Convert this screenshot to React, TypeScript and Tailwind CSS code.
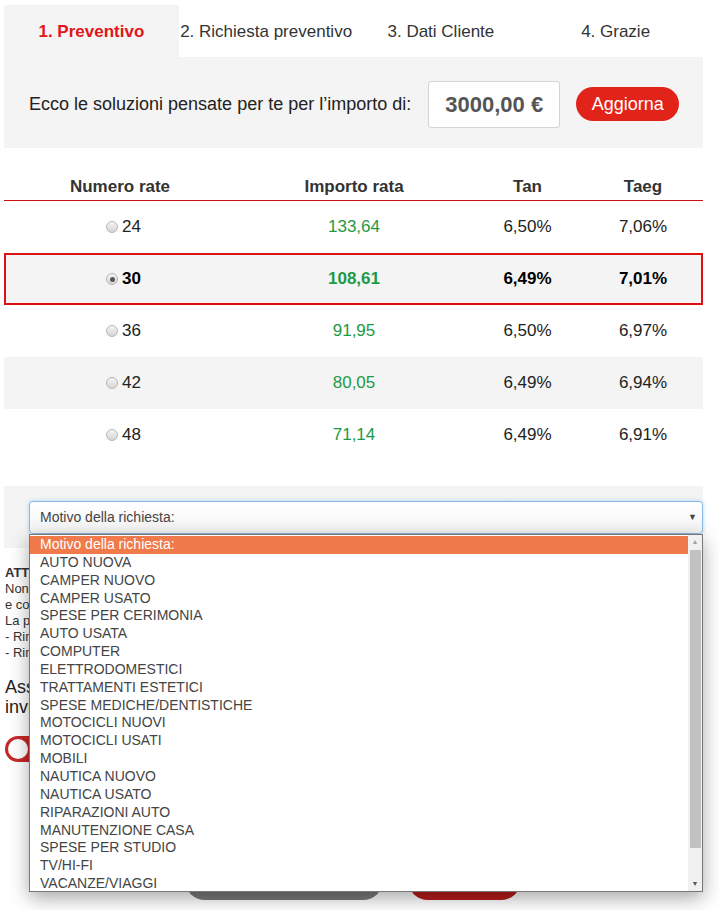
import React from "react";

const tabs = ["1. Preventivo", "2. Richiesta preventivo", "3. Dati Cliente", "4. Grazie"];

const rows = [
  { n: 24, rata: "133,64", tan: "6,50%", taeg: "7,06%" },
  { n: 30, rata: "108,61", tan: "6,49%", taeg: "7,01%", selected: true },
  { n: 36, rata: "91,95", tan: "6,50%", taeg: "6,97%" },
  { n: 42, rata: "80,05", tan: "6,49%", taeg: "6,94%" },
  { n: 48, rata: "71,14", tan: "6,49%", taeg: "6,91%" },
];

const motivi = [
  "Motivo della richiesta:",
  "AUTO NUOVA",
  "CAMPER NUOVO",
  "CAMPER USATO",
  "SPESE PER CERIMONIA",
  "AUTO USATA",
  "COMPUTER",
  "ELETTRODOMESTICI",
  "TRATTAMENTI ESTETICI",
  "SPESE MEDICHE/DENTISTICHE",
  "MOTOCICLI NUOVI",
  "MOTOCICLI USATI",
  "MOBILI",
  "NAUTICA NUOVO",
  "NAUTICA USATO",
  "RIPARAZIONI AUTO",
  "MANUTENZIONE CASA",
  "SPESE PER STUDIO",
  "TV/HI-FI",
  "VACANZE/VIAGGI",
];

const Radio = ({ checked }: { checked?: boolean }) => (
  <span className="mr-[4px] inline-flex h-[12px] w-[12px] items-center justify-center rounded-full border border-[#b5b5b5] bg-gradient-to-b from-[#f4f4f4] to-[#d6d6d6]">
    {checked && <span className="h-[5px] w-[5px] rounded-full bg-[#555]" />}
  </span>
);

const App = () => {
  return (
    <div className="min-h-[910px] bg-white pt-[5px] font-['Liberation_Sans',Arial,sans-serif] text-[#222]">
      <div className="ml-[4px] w-[699px]">
        {/* steps */}
        <div className="grid h-[52px] grid-cols-4 pt-[2px]">
          {tabs.map((t, i) => (
            <div
              key={t}
              className={
                i === 0
                  ? "-mt-[2px] flex items-center justify-center bg-[#f4f4f4] pt-[2px] text-[17px] font-bold text-[#e2151b]"
                  : "flex items-center justify-center text-[17px] text-[#333]"
              }
            >
              {t}
            </div>
          ))}
        </div>

        {/* importo */}
        <div className="flex h-[91px] items-center bg-[#f4f4f4] pl-[25px] pt-[3px]">
          <span className="text-[18px] text-[#222]">Ecco le soluzioni pensate per te per l’importo di:</span>
          <div className="ml-[17px] flex h-[47px] w-[132px] items-center justify-center rounded-[3px] border border-[#d4d4d4] bg-white text-[22px] font-bold text-[#555]">
            3000,00 €
          </div>
          <button className="ml-[16px] h-[34px] w-[103px] rounded-full bg-[#e2231a] text-[18px] text-white">
            Aggiorna
          </button>
        </div>

        {/* tabella */}
        <div className="grid h-[53px] grid-cols-[232px_236px_111px_120px] items-end border-b border-[#cc1010] pb-[1px] text-[17px] font-bold text-[#333]">
          <div className="text-center">Numero rate</div>
          <div className="text-center">Importo rata</div>
          <div className="text-center">Tan</div>
          <div className="text-center">Taeg</div>
        </div>
        {rows.map((r, i) => (
          <div
            key={r.n}
            className={
              "grid h-[52px] grid-cols-[232px_236px_111px_120px] items-center text-[17px] " +
              (r.selected ? "bg-[#f4f4f4] font-bold text-black shadow-[inset_0_0_0_2px_#dd1111] " : "") +
              (!r.selected && i % 2 === 1 ? "bg-[#f4f4f4] text-[#222]" : "text-[#222]")
            }
          >
            <div className="flex items-center justify-center pl-[7px]">
              <Radio checked={r.selected} />
              <span>{r.n}</span>
            </div>
            <div className="text-center text-[#1e9a44]">{r.rata}</div>
            <div className="text-center">{r.tan}</div>
            <div className="text-center">{r.taeg}</div>
          </div>
        ))}

        {/* motivo */}
        <div className="mt-[25px] h-[62px] bg-[#f4f4f4] pl-[25px] pt-[15px]">
          <div className="relative">
            <div className="flex h-[33px] items-center justify-between rounded-[4px] border border-[#8ab8e6] bg-gradient-to-b from-white to-[#f4f4f4] pl-[10px] pr-[5px] text-[14px] text-[#444] shadow-[0_0_4px_rgba(102,175,233,0.5)]">
              <span>Motivo della richiesta:</span>
              <span className="text-[9px] text-[#444]">▼</span>
            </div>

            <div className="absolute left-0 right-0 top-[33px] z-10 flex h-[358px] border border-[#777] bg-white shadow-[0_6px_18px_rgba(0,0,0,0.35)]">
              <ul className="flex-1 pt-[1px] text-[14px] text-[#444]">
                {motivi.map((m, i) => (
                  <li
                    key={m}
                    className={
                      i === 0
                        ? "h-[17.85px] bg-[#f07a4a] pl-[10px] leading-[17.85px] text-white"
                        : "h-[17.85px] pl-[10px] leading-[17.85px]"
                    }
                  >
                    {m}
                  </li>
                ))}
              </ul>
              <div className="flex w-[14px] flex-col items-center bg-[#f1f1f1]">
                <span className="flex h-[15px] items-center text-[7px] text-[#a3a3a3]">▲</span>
                <div className="h-[298px] w-[11px] rounded-[1px] bg-[#c1c1c1]" />
                <div className="flex-1" />
                <span className="flex h-[14px] items-center text-[7px] text-[#555]">▼</span>
              </div>
            </div>
          </div>
        </div>

        {/* avvertenze (coperte dal menu) */}
        <div className="pl-[1px] pt-[17px] text-[13px] leading-[16px] text-[#333]">
          <p className="font-bold">ATTENZIONE:</p>
          <p>Non è possibile richiedere un finanziamento per importi superiori al limite previsto</p>
          <p>e comunque soggetti a valutazione da parte dell’istituto erogante.</p>
          <p>La pratica può essere richiesta per:</p>
          <p>- Rimborso in 24, 30, 36, 42 o 48 rate mensili</p>
          <p>- Rimborso anticipato senza penali</p>
        </div>
        <p className="mt-[16px] pl-[1px] text-[18px] leading-[20px] text-[#222]">
          Assicurati di aver selezionato correttamente l’importo e il numero di rate prima di
          <br />
          inviare la richiesta di preventivo.
        </p>
        <div className="mt-[19px] pl-[1px]">
          <div className="flex h-[26px] w-[50px] items-center rounded-full bg-[#c62828] p-[3px]">
            <div className="h-[20px] w-[20px] rounded-full bg-white" />
          </div>
        </div>
        <div className="mt-[98px] flex gap-[25px] pl-[181px]">
          <button className="h-[40px] w-[198px] rounded-full bg-[#7a7a7a] text-[17px] text-white">Indietro</button>
          <button className="h-[40px] w-[113px] rounded-full bg-[#b71c1c] text-[17px] text-white">Avanti</button>
        </div>
      </div>
    </div>
  );
};

export default App;
